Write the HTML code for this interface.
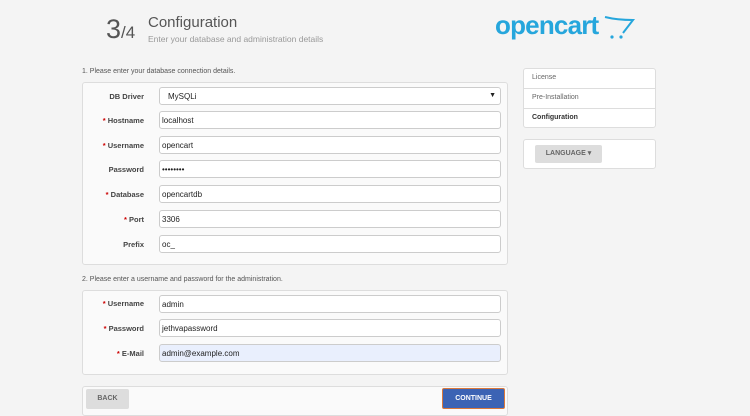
<!DOCTYPE html>
<html><head><meta charset="utf-8"><style>
*{box-sizing:border-box;margin:0;padding:0}
body{width:750px;height:413px;overflow:hidden;background:#f4f4f4;font-family:"Liberation Sans",sans-serif;color:#444;position:relative;font-size:8px}
.a{position:absolute}
.panel{position:absolute;background:#fafafa;border:1px solid #ddd;border-radius:3px}
.lbl{position:absolute;width:64px;text-align:right;font-weight:bold;font-size:7.5px;color:#444;left:80px}
.lbl b{color:#c00}
.inp{position:absolute;left:159px;width:342px;height:18px;background:#fff;border:1px solid #ccc;border-radius:3px;font-size:8px;padding:4px 0 0 2px;color:#222}
.nav div{height:20px;border-bottom:1px solid #ddd;padding:5px 0 0 8px;font-size:7px;color:#666}
.btn{position:absolute;border-radius:2px;font-size:7px;font-weight:bold;text-align:center;line-height:20px}
</style></head><body>
<div class="a" style="left:106px;top:14px;font-size:27px;color:#555">3<span style="font-size:17px">/4</span></div>
<div class="a" style="left:148px;top:14px;font-size:15px;color:#555">Configuration</div>
<div class="a" style="left:148px;top:34px;font-size:8.5px;color:#999">Enter your database and administration details</div>
<div class="a" style="left:495px;top:10px;font-size:26px;font-weight:bold;color:#26a6dc;letter-spacing:-0.8px">opencart</div>
<svg class="a" style="left:603px;top:14px" width="34" height="26"><path d="M2 3 Q14 6 30 6 L20 19" stroke="#26a6dc" stroke-width="2" fill="none"/><circle cx="9" cy="23" r="1.6" fill="#26a6dc"/><circle cx="18" cy="23" r="1.6" fill="#26a6dc"/></svg>
<div class="a" style="left:82px;top:68px;font-size:7px;color:#555">1. Please enter your database connection details.</div>
<div class="panel" style="left:82px;top:82px;width:426px;height:183px"></div>
<div class="lbl" style="top:92px">DB Driver</div><div class="inp" style="top:87px;padding-left:8px">MySQLi<span style="position:absolute;right:4px;font-size:7px">▼</span></div>
<div class="lbl" style="top:116px"><b>*</b> Hostname</div><div class="inp" style="top:111px">localhost</div>
<div class="lbl" style="top:141px"><b>*</b> Username</div><div class="inp" style="top:136px">opencart</div>
<div class="lbl" style="top:165px">Password</div><div class="inp" style="top:160px">••••••••</div>
<div class="lbl" style="top:190px"><b>*</b> Database</div><div class="inp" style="top:185px">opencartdb</div>
<div class="lbl" style="top:215px"><b>*</b> Port</div><div class="inp" style="top:210px">3306</div>
<div class="lbl" style="top:240px">Prefix</div><div class="inp" style="top:235px">oc_</div>
<div class="a" style="left:82px;top:276px;font-size:7px;color:#555">2. Please enter a username and password for the administration.</div>
<div class="panel" style="left:82px;top:290px;width:426px;height:85px"></div>
<div class="lbl" style="top:299px"><b>*</b> Username</div><div class="inp" style="top:295px">admin</div>
<div class="lbl" style="top:324px"><b>*</b> Password</div><div class="inp" style="top:319px">jethvapassword</div>
<div class="lbl" style="top:349px"><b>*</b> E-Mail</div><div class="inp" style="top:344px;background:#e9effd">admin@example.com</div>
<div class="panel" style="left:82px;top:386px;width:426px;height:30px"></div>
<div class="btn" style="left:86px;top:389px;width:43px;height:20px;background:#ddd;color:#666">BACK</div>
<div class="btn" style="left:442px;top:388px;width:63px;height:21px;background:#3c63b4;border:1px solid #d9783c;color:#fff;line-height:19px">CONTINUE</div>
<div class="panel nav" style="left:523px;top:68px;width:133px;height:60px;background:#fff">
<div>License</div><div>Pre-Installation</div><div style="border:none;font-weight:bold;color:#333">Configuration</div></div>
<div class="panel" style="left:523px;top:139px;width:133px;height:30px;background:#fff"></div>
<div class="btn" style="left:535px;top:145px;width:67px;height:18px;background:#ddd;color:#666;line-height:18px">LANGUAGE ▾</div>
</body></html>
